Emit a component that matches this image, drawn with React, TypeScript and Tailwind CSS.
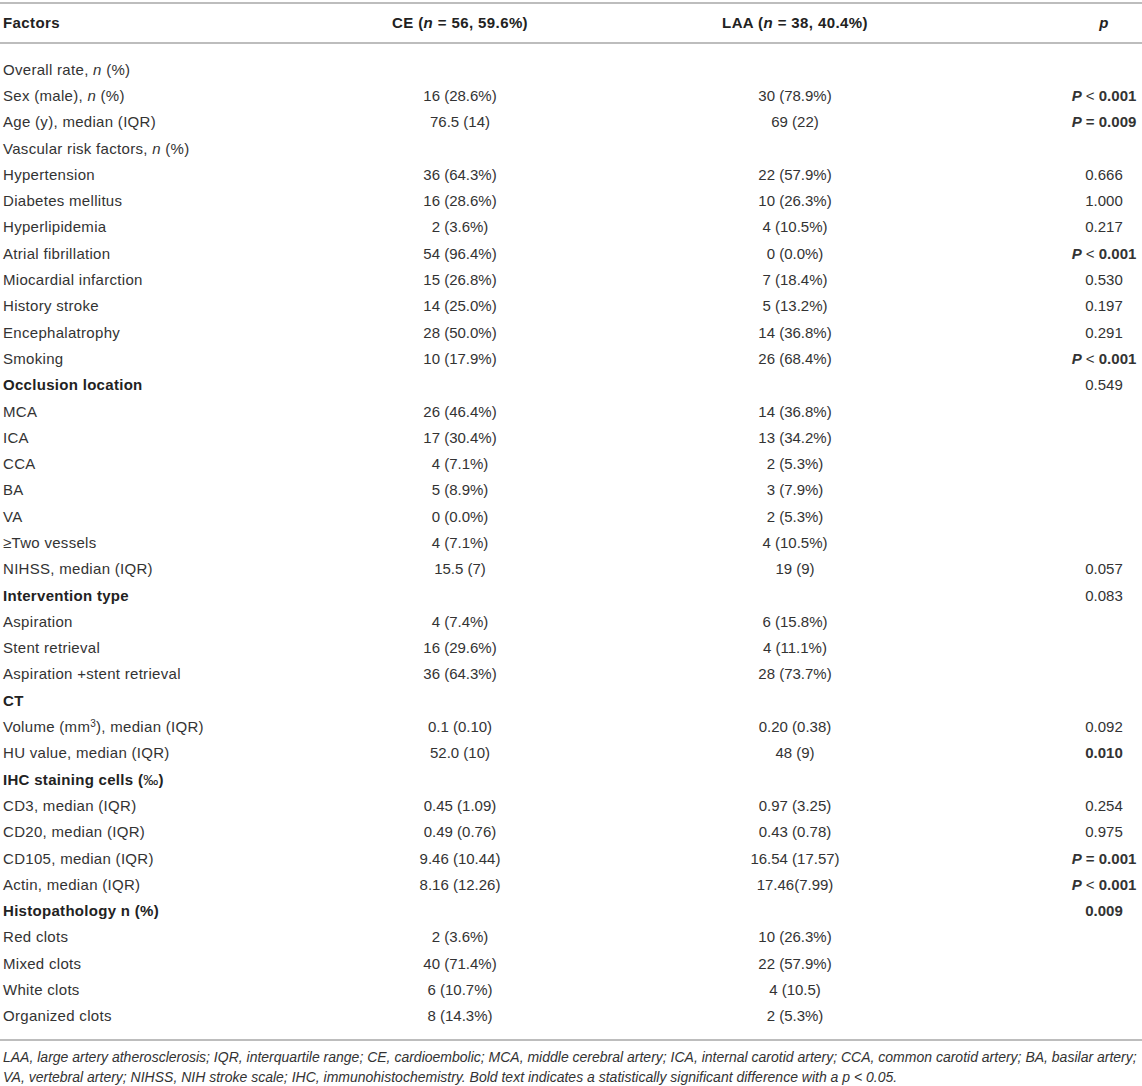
import React from 'react';

type Row = {
  label: React.ReactNode;
  ce?: string;
  laa?: string;
  p?: React.ReactNode;
  head?: boolean;
};

const PLess = () => (
  <span className="font-bold"><i>P</i> <span className="font-normal">&lt;</span> 0.001</span>
);
const PEq = (v: string) => (
  <span className="font-bold"><i>P</i> = {v}</span>
);

const rows: Row[] = [
  { label: <>Overall rate, <i>n</i> (%)</> },
  { label: <>Sex (male), <i>n</i> (%)</>, ce: '16 (28.6%)', laa: '30 (78.9%)', p: <PLess /> },
  { label: 'Age (y), median (IQR)', ce: '76.5 (14)', laa: '69 (22)', p: PEq('0.009') },
  { label: <>Vascular risk factors, <i>n</i> (%)</> },
  { label: 'Hypertension', ce: '36 (64.3%)', laa: '22 (57.9%)', p: '0.666' },
  { label: 'Diabetes mellitus', ce: '16 (28.6%)', laa: '10 (26.3%)', p: '1.000' },
  { label: 'Hyperlipidemia', ce: '2 (3.6%)', laa: '4 (10.5%)', p: '0.217' },
  { label: 'Atrial fibrillation', ce: '54 (96.4%)', laa: '0 (0.0%)', p: <PLess /> },
  { label: 'Miocardial infarction', ce: '15 (26.8%)', laa: '7 (18.4%)', p: '0.530' },
  { label: 'History stroke', ce: '14 (25.0%)', laa: '5 (13.2%)', p: '0.197' },
  { label: 'Encephalatrophy', ce: '28 (50.0%)', laa: '14 (36.8%)', p: '0.291' },
  { label: 'Smoking', ce: '10 (17.9%)', laa: '26 (68.4%)', p: <PLess /> },
  { label: 'Occlusion location', head: true, p: '0.549' },
  { label: 'MCA', ce: '26 (46.4%)', laa: '14 (36.8%)' },
  { label: 'ICA', ce: '17 (30.4%)', laa: '13 (34.2%)' },
  { label: 'CCA', ce: '4 (7.1%)', laa: '2 (5.3%)' },
  { label: 'BA', ce: '5 (8.9%)', laa: '3 (7.9%)' },
  { label: 'VA', ce: '0 (0.0%)', laa: '2 (5.3%)' },
  { label: '≥Two vessels', ce: '4 (7.1%)', laa: '4 (10.5%)' },
  { label: 'NIHSS, median (IQR)', ce: '15.5 (7)', laa: '19 (9)', p: '0.057' },
  { label: 'Intervention type', head: true, p: '0.083' },
  { label: 'Aspiration', ce: '4 (7.4%)', laa: '6 (15.8%)' },
  { label: 'Stent retrieval', ce: '16 (29.6%)', laa: '4 (11.1%)' },
  { label: 'Aspiration +stent retrieval', ce: '36 (64.3%)', laa: '28 (73.7%)' },
  { label: 'CT', head: true },
  { label: <>Volume (mm<sup className="text-[10px]">3</sup>), median (IQR)</>, ce: '0.1 (0.10)', laa: '0.20 (0.38)', p: '0.092' },
  { label: 'HU value, median (IQR)', ce: '52.0 (10)', laa: '48 (9)', p: <span className="font-bold">0.010</span> },
  { label: <>IHC staining cells (<span className="font-normal">‰</span>)</>, head: true },
  { label: 'CD3, median (IQR)', ce: '0.45 (1.09)', laa: '0.97 (3.25)', p: '0.254' },
  { label: 'CD20, median (IQR)', ce: '0.49 (0.76)', laa: '0.43 (0.78)', p: '0.975' },
  { label: 'CD105, median (IQR)', ce: '9.46 (10.44)', laa: '16.54 (17.57)', p: PEq('0.001') },
  { label: 'Actin, median (IQR)', ce: '8.16 (12.26)', laa: '17.46(7.99)', p: <PLess /> },
  { label: 'Histopathology n (%)', head: true, p: <span className="font-bold">0.009</span> },
  { label: 'Red clots', ce: '2 (3.6%)', laa: '10 (26.3%)' },
  { label: 'Mixed clots', ce: '40 (71.4%)', laa: '22 (57.9%)' },
  { label: 'White clots', ce: '6 (10.7%)', laa: '4 (10.5)' },
  { label: 'Organized clots', ce: '8 (14.3%)', laa: '2 (5.3%)' },
];

// column centres: CE 460, LAA 795, p 1104
const cols = 'grid grid-cols-[400px_120px_550px_68px]';
const cell = 'flex justify-center whitespace-nowrap';

export default function App() {
  return (
    <div className="w-[1142px] bg-white text-[#333] font-['Liberation_Sans',Arial,sans-serif] text-[15px] pt-[2px]">
      {/* header */}
      <div className={`${cols} h-[42px] items-center border-y-2 border-[#bdbdbd] font-bold text-[#222] tracking-[0.4px]`}>
        <div className="pl-[3px]">Factors</div>
        <div className={cell}><span>CE (<i>n</i> = 56, 59.6%)</span></div>
        <div className={cell}><span>LAA (<i>n</i> = 38, 40.4%)</span></div>
        <div className={cell}><i>p</i></div>
      </div>

      {/* body */}
      <div className="pt-[12px] pb-[10px] border-b-2 border-[#bdbdbd]">
        {rows.map((r, i) => (
          <div key={i} className={`${cols} h-[26.3px] items-center leading-none`}>
            <div className={`pl-[3px] whitespace-nowrap tracking-[0.3px] ${r.head ? 'font-bold text-[#222]' : ''}`}>{r.label}</div>
            <div className={cell}>{r.ce}</div>
            <div className={cell}>{r.laa}</div>
            <div className={cell}>{r.p}</div>
          </div>
        ))}
      </div>

      {/* footnote */}
      <p className="pl-[3px] pt-[6px] italic text-[14px] leading-[20px] text-[#333] whitespace-nowrap">
        LAA, large artery atherosclerosis; IQR, interquartile range; CE, cardioembolic; MCA, middle cerebral artery; ICA, internal carotid artery; CCA, common carotid artery; BA, basilar artery;
        <br />
        VA, vertebral artery; NIHSS, NIH stroke scale; IHC, immunohistochemistry. Bold text indicates a statistically significant difference with a p &lt; 0.05.
      </p>
    </div>
  );
}
